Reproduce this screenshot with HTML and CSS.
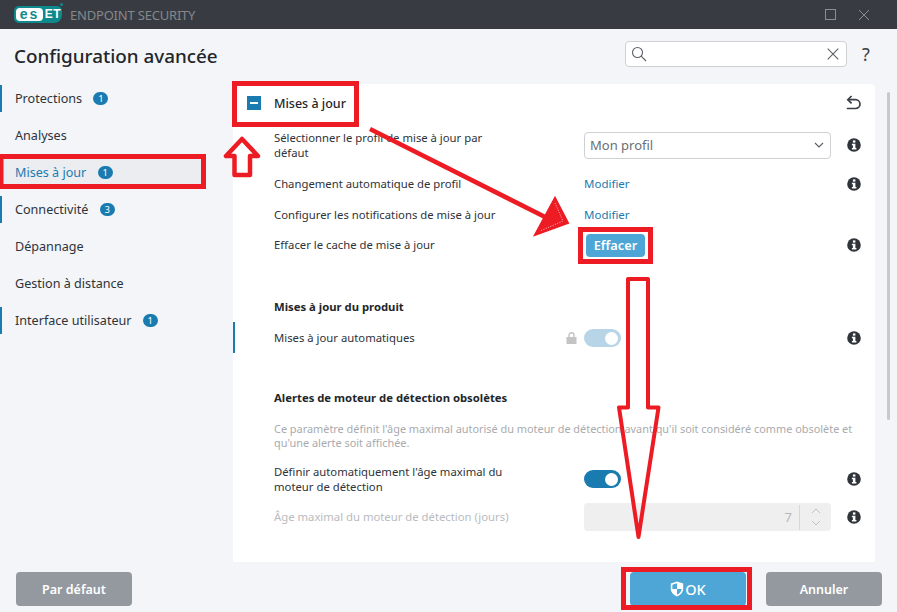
FILE: index.html
```html
<!DOCTYPE html>
<html lang="fr">
<head>
<meta charset="utf-8">
<title>ESET Endpoint Security</title>
<link rel="stylesheet" href="styles.css">
</head>
<body>
<svg width="0" height="0" class="defs"><defs>
<symbol id="info" viewBox="0 0 14 14"><circle cx="7" cy="7" r="6.8" fill="#2f343a"/><rect x="5.9" y="2.4" width="2.5" height="2.2" fill="#fff"/><path d="M4.9 5.700h3.500v4.400h1v1.500H4.900v-1.500h1V7.200h-1z" fill="#fff"/></symbol>
<symbol id="shield" viewBox="0 0 14 16"><path d="M7 .5 13.200 2.600V7.600C13.200 11.400 10.500 14.200 7 15.500 3.500 14.200.8 11.400.8 7.600V2.600Z" fill="#fff"/><path d="M7 2.300V8H2.400V3.700ZM7 8h4.600C11.400 10.600 9.500 12.700 7 13.800Z" fill="#4da6d6"/></symbol>
</defs></svg>
<div class="app">
  <header class="titlebar">
    <div class="brand">
      <span class="logo"><span class="logo-pill">es</span><span class="logo-t">et</span><span class="logo-dot"></span></span>
      <span class="product">ENDPOINT SECURITY</span>
    </div>
    <div class="winctl">
      <svg width="12" height="12" viewBox="0 0 12 12"><rect x=".5" y=".5" width="10" height="10" fill="none" stroke="#8b8f94"/></svg>
      <svg width="12" height="12" viewBox="0 0 12 12"><path d="M1 1l10 10M11 1 1 11" stroke="#8b8f94" fill="none"/></svg>
    </div>
  </header>
  <div class="headrow">
    <h1>Configuration avancée</h1>
    <div class="tools">
      <div class="search">
        <svg width="16" height="16" viewBox="0 0 16 16"><circle cx="6.500" cy="6.500" r="5" fill="none" stroke="#5b6066" stroke-width="1.100"/><path d="M10.200 10.200 15 15" stroke="#5b6066" stroke-width="1.100"/></svg>
        <svg width="12" height="12" viewBox="0 0 12 12"><path d="M.7.7l10.600 10.600M11.300.7.7 11.300" stroke="#5b6066" stroke-width="1.100" fill="none"/></svg>
      </div>
      <span class="help">?</span>
    </div>
  </div>
  <div class="main">
    <nav class="side">
      <div class="nav mark">Protections <span class="badge">1</span></div>
      <div class="nav">Analyses</div>
      <div class="nav active">Mises à jour <span class="badge">1</span></div>
      <div class="nav mark">Connectivité <span class="badge">3</span></div>
      <div class="nav">Dépannage</div>
      <div class="nav">Gestion à distance</div>
      <div class="nav mark">Interface utilisateur <span class="badge">1</span></div>
    </nav>
    <section class="panel">
      <div class="panel-head">
        <span class="collapse"><span class="dash"></span></span>
        <h2>Mises à jour</h2>
        <svg class="undo" width="15" height="16" viewBox="0 0 15 16"><path d="M5.600 1 1.800 4.700l3.800 3.600" fill="none" stroke="#3a3f45" stroke-width="1.700"/><path d="M2 4.700h7.600a4.100 4.100 0 0 1 0 8.800H.8" fill="none" stroke="#3a3f45" stroke-width="1.700"/></svg>
      </div>
      <div class="row r-select">
        <div class="label wrap">Sélectionner le profil de mise à jour par défaut</div>
        <div class="ctl"><div class="select"><span>Mon profil</span><svg width="10" height="6" viewBox="0 0 10 6"><path d="M1 1l4 4 4-4" fill="none" stroke="#5b6066" stroke-width="1.100"/></svg></div></div>
        <svg class="info"><use href="#info"/></svg>
      </div>
      <div class="row r-a">
        <div class="label">Changement automatique de profil</div>
        <div class="ctl"><a class="link">Modifier</a></div>
        <svg class="info"><use href="#info"/></svg>
      </div>
      <div class="row r-b">
        <div class="label">Configurer les notifications de mise à jour</div>
        <div class="ctl"><a class="link">Modifier</a></div>
        <span class="info"></span>
      </div>
      <div class="row r-c">
        <div class="label">Effacer le cache de mise à jour</div>
        <div class="ctl"><button class="btn-small">Effacer</button></div>
        <svg class="info"><use href="#info"/></svg>
      </div>
      <h3 class="sub s1">Mises à jour du produit</h3>
      <div class="row r-d marked">
        <div class="label">Mises à jour automatiques</div>
        <div class="ctl">
          <svg class="lock" width="11" height="12" viewBox="0 0 11 12"><path d="M3 5V3.200a2.500 2.500 0 0 1 5 0V5" fill="none" stroke="#c4c4c4" stroke-width="1.400"/><rect x=".5" y="5" width="10" height="7" fill="#c4c4c4"/></svg>
          <span class="toggle off"><span class="knob"></span></span>
        </div>
        <svg class="info"><use href="#info"/></svg>
      </div>
      <h3 class="sub s2">Alertes de moteur de détection obsolètes</h3>
      <p class="desc">Ce paramètre définit l'âge maximal autorisé du moteur de détection avant qu'il soit considéré comme obsolète et qu'une alerte soit affichée.</p>
      <div class="row r-e">
        <div class="label wrap">Définir automatiquement l'âge maximal du moteur de détection</div>
        <div class="ctl"><span class="toggle"><span class="knob"></span></span></div>
        <svg class="info"><use href="#info"/></svg>
      </div>
      <div class="row r-f">
        <div class="label muted">Âge maximal du moteur de détection (jours)</div>
        <div class="ctl"><div class="number"><span class="val">7</span><span class="spin"><svg width="10" height="6" viewBox="0 0 10 6"><path d="M1 5l4-4 4 4" fill="none" stroke="#c0c2c4"/></svg><svg width="10" height="6" viewBox="0 0 10 6"><path d="M1 1l4 4 4-4" fill="none" stroke="#c0c2c4"/></svg></span></div></div>
        <svg class="info"><use href="#info"/></svg>
      </div>
    </section>
    <div class="scrollbar"><span class="thumb"></span></div>
  </div>
  <footer class="foot">
    <button class="btn grey">Par défaut</button>
    <div class="foot-right">
      <button class="btn blue ok"><svg width="14" height="16"><use href="#shield"/></svg>OK</button>
      <button class="btn grey">Annuler</button>
    </div>
  </footer>
  <svg class="notes" width="897" height="612" viewBox="0 0 897 612">
    <g fill="none" stroke="#ed1c24" stroke-width="5">
      <rect x="234.500" y="83.500" width="122" height="41"/>
      <rect x="1" y="156.500" width="202.500" height="30"/>
      <rect x="580.500" y="229.500" width="70" height="32"/>
      <rect x="623.500" y="569.500" width="126" height="38"/>
    </g>
    <path d="M242 139 226 156H234.500V175H250V156H258Z" fill="none" stroke="#ed1c24" stroke-width="4.500" stroke-linejoin="round"/>
    <path d="M628 279H648V407.500H658.500L638.500 537 619 407.500H628Z" fill="none" stroke="#ed1c24" stroke-width="4" stroke-linejoin="round"/>
    <path d="M370 129 553 221" stroke="#ed1c24" stroke-width="4.500" fill="none"/>
    <path d="M555 198 568 223 535 235Z" fill="#ed1c24" stroke="#ed1c24" stroke-width="2"/>
    <path d="M555 203 563 221 540 231" fill="none" stroke="#fff" stroke-width=".7" stroke-dasharray="1 1.500"/>
  </svg>
</div>
</body>
</html>
```
FILE: styles.css
```css
* { box-sizing: border-box; }
html, body { margin: 0; padding: 0; }
body { width: 897px; height: 612px; overflow: hidden; font-family: "Noto Sans", "Open Sans", sans-serif; font-size: 11.300px; color: #2e333a; background: #f3f5f8; }
.defs { position: absolute; }
.app { position: relative; width: 897px; height: 612px; display: flex; flex-direction: column; }

.titlebar { height: 29px; background: #383c42; display: flex; align-items: center; justify-content: space-between; padding: 0 27px 0 14px; }
.brand { display: flex; align-items: center; gap: 8px; }
.logo { position: relative; width: 48px; height: 17px; background: #0d8a8d; border-radius: 5px 5px 8px 5px; display: flex; align-items: center; padding-left: 2px; gap: 1px; font: 700 14px/13px "Liberation Sans", sans-serif; }
.logo-pill { width: 27px; height: 13px; border-radius: 4px; background: #fff; color: #0d8a8d; text-align: center; letter-spacing: 2px; line-height: 12px; }
.logo-t { color: #fff; width: 18px; text-align: center; text-transform: uppercase; font-size: 12px; letter-spacing: .5px; }
.logo-dot { position: absolute; right: -1px; top: -3px; width: 3px; height: 3px; border-radius: 50%; background: #0d8a8d; }
.product { color: #84888d; font-size: 13px; letter-spacing: -.2px; }
.winctl { display: flex; gap: 21px; align-items: center; }

.headrow { height: 55px; display: flex; align-items: center; justify-content: space-between; padding: 0 26px 0 14px; }
h1 { margin: -2px 0 0; font-size: 18.850px; font-weight: 500; color: #22262b; }
.tools { display: flex; align-items: center; gap: 15px; margin-top: -5px; }
.search { width: 222px; height: 26px; background: #fff; border: 1px solid #cfd0d2; border-radius: 4px; display: flex; align-items: center; justify-content: space-between; padding: 0 7px 0 5px; }
.help { font-size: 18px; color: #3a3f45; width: 9px; }

.main { flex: 1; min-height: 0; display: flex; }
.side { width: 233px; display: flex; flex-direction: column; padding-top: 1px; }
.nav { height: 27px; margin-bottom: 10px; padding-left: 13px; display: flex; align-items: center; gap: 6px; font-size: 12.600px; color: #2e333a; border-left: 2px solid transparent; margin-right: 30px; white-space: pre; }
.nav.mark { border-left-color: #1a7bb0; }
.nav.active { color: #1a7bb0; background: #ecedf0; }
.badge { width: 15px; height: 13px; border-radius: 7px; background: #1a7bb0; color: #fff; font-size: 9.500px; line-height: 13px; text-align: center; margin-left: 2px; }

.panel { width: 642px; background: #fff; border-radius: 0 4px 0 0; }
.panel-head { height: 38px; display: flex; align-items: center; padding: 0 14px 0 14px; }
.collapse { width: 14px; height: 14px; background: #1a7bb0; display: flex; align-items: center; justify-content: center; }
.dash { width: 8px; height: 2px; background: #fff; }
h2 { margin: 0 0 0 13px; font-size: 12.500px; font-weight: 500; color: #22262b; flex: 1; }

.row { display: flex; align-items: center; padding-left: 41px; position: relative; }
.label { width: 310px; line-height: 15.500px; }
.label.wrap { width: 235px; margin-right: 75px; }
.label.muted { color: #b9bbbe; }
.ctl { width: 247px; display: flex; align-items: center; }
.info { width: 14px; height: 14px; margin-left: 16px; flex: none; }
.r-select { height: 32px; margin-top: 7px; margin-bottom: 7px; }
.r-a { height: 31px; }
.r-b { height: 31px; }
.r-c { height: 30px; }
.r-d { height: 26px; }
.r-e { height: 32px; margin-top: 13px; }
.r-f { height: 28px; margin-top: 8px; }

.select { width: 247px; height: 27px; border: 1px solid #cfd0d2; border-radius: 4px; display: flex; align-items: center; justify-content: space-between; padding: 0 6px 0 5px; color: #6b6f74; font-size: 13px; }
.link { color: #1a7bb0; font-size: 11.500px; }
.btn-small { height: 23px; width: 59px; margin-left: 2px; border: 0; border-radius: 4px; background: #4da6d6; color: #fff; font: 600 12.800px "Noto Sans", sans-serif; padding: 0; }

.sub { margin: 0; font-size: 11.300px; font-weight: 700; color: #22262b; padding-left: 41px; line-height: 16px; }
.s1 { margin-top: 39px; }
.s2 { margin-top: 39px; }
.marked { margin-top: 10px; }
.marked::before { content: ""; position: absolute; left: 0; top: -3px; height: 31px; width: 2px; background: #1a7bb0; }
.lock { margin-right: 7px; margin-left: -18px; }
.toggle { width: 37px; height: 18px; border-radius: 9px; background: #1a7bb0; display: flex; align-items: center; justify-content: flex-end; padding-right: 3px; }
.toggle.off { background: #b7d5e7; }
.knob { width: 13px; height: 13px; border-radius: 50%; background: #fff; }

.desc { margin: 16px 12px 0 41px; color: #a9abae; font-size: 10.900px; line-height: 14px; }

.number { width: 247px; height: 28px; background: #efefef; border-radius: 4px; display: flex; align-items: center; justify-content: flex-end; color: #b5b7b9; font-size: 13px; }
.val { padding-right: 7px; }
.spin { width: 32px; height: 25px; border-left: 1px solid #d8d8d8; display: flex; flex-direction: column; align-items: center; justify-content: center; gap: 6px; }

.scrollbar { width: 22px; padding-left: 12px; padding-top: 8px; }
.thumb { display: block; width: 3px; height: 328px; background: #c7c9cb; border-radius: 2px; }

.foot { height: 50px; display: flex; align-items: flex-start; justify-content: space-between; padding: 10px 15px 0 16px; }
.foot-right { display: flex; gap: 20px; }
.btn { height: 34px; width: 116px; border: 0; border-radius: 4px; color: #fff; font: 600 12.500px "Noto Sans", sans-serif; padding: 0; display: flex; align-items: center; justify-content: center; gap: 1px; }
.grey { background: #9499a0; }
.blue { background: #4da6d6; }
.ok { font-size: 14.500px; font-weight: 500; }
.notes { position: absolute; left: 0; top: 0; pointer-events: none; }
```
